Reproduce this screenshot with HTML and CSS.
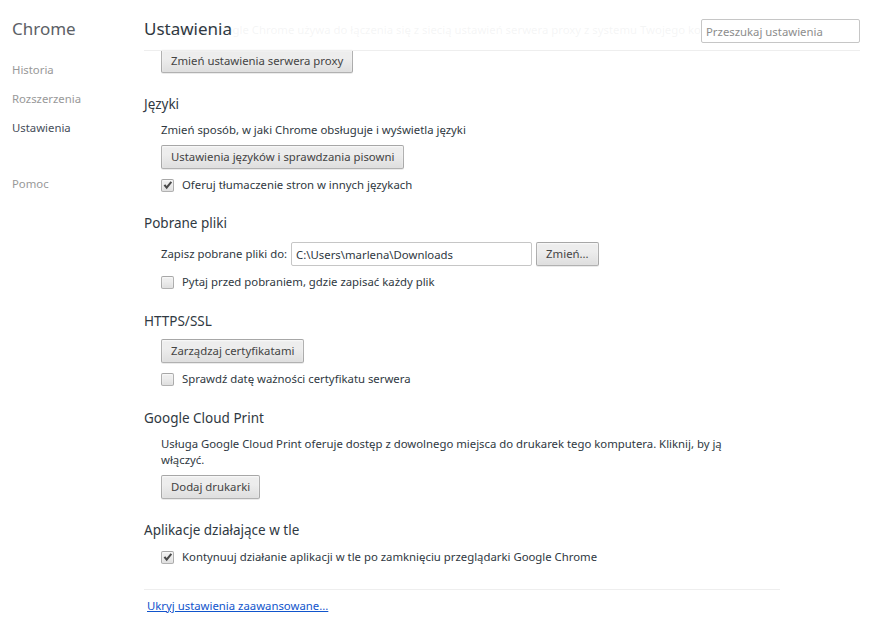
FILE: index.html
```html
<!DOCTYPE html>
<html lang="pl">
<head>
<meta charset="utf-8">
<title>Ustawienia</title>
<link rel="stylesheet" href="styles.css">
</head>
<body>
<div class="app">
  <aside class="sidebar">
    <h1 class="brand">Chrome</h1>
    <ul class="nav">
      <li>Historia</li>
      <li>Rozszerzenia</li>
      <li class="active">Ustawienia</li>
      <li class="nav-sep">Pomoc</li>
    </ul>
  </aside>
  <main class="main">
    <header class="page-header">
      <h2 class="page-title">Ustawienia</h2>
      <input class="search" type="text" placeholder="Przeszukaj ustawienia">
    </header>
    <div class="content">
      <div class="proxy">
        <p class="text scrolled">Program Google Chrome używa do łączenia się z siecią ustawień serwera proxy z systemu Twojego komputera.</p>
        <button class="btn">Zmień ustawienia serwera proxy</button>
      </div>

      <section class="section">
        <h3 class="section-title">Języki</h3>
        <div class="section-body">
          <p class="text">Zmień sposób, w jaki Chrome obsługuje i wyświetla języki</p>
          <button class="btn">Ustawienia języków i sprawdzania pisowni</button>
          <label class="check"><span class="box checked"><svg viewBox="0 0 13 13" width="13" height="13"><path d="M2.6 6.6 L4.3 5.2 L5.6 7.1 L9.6 2.2 L11.1 3.4 L5.7 10.2 Z" fill="#4a4a4a"/></svg></span>Oferuj tłumaczenie stron w innych językach</label>
        </div>
      </section>

      <section class="section section-tight">
        <h3 class="section-title">Pobrane pliki</h3>
        <div class="section-body">
          <div class="path-row">
            <span class="text">Zapisz pobrane pliki do:</span>
            <input class="path" type="text" value="C:\Users\marlena\Downloads">
            <button class="btn btn-small">Zmień...</button>
          </div>
          <label class="check"><span class="box"></span>Pytaj przed pobraniem, gdzie zapisać każdy plik</label>
        </div>
      </section>

      <section class="section">
        <h3 class="section-title">HTTPS/SSL</h3>
        <div class="section-body">
          <button class="btn">Zarządzaj certyfikatami</button>
          <label class="check"><span class="box"></span>Sprawdź datę ważności certyfikatu serwera</label>
        </div>
      </section>

      <section class="section">
        <h3 class="section-title">Google Cloud Print</h3>
        <div class="section-body">
          <p class="text para">Usługa Google Cloud Print oferuje dostęp z dowolnego miejsca do drukarek tego komputera. Kliknij, by ją włączyć.</p>
          <button class="btn">Dodaj drukarki</button>
        </div>
      </section>

      <section class="section">
        <h3 class="section-title">Aplikacje działające w tle</h3>
        <div class="section-body">
          <label class="check"><span class="box checked"><svg viewBox="0 0 13 13" width="13" height="13"><path d="M2.6 6.6 L4.3 5.2 L5.6 7.1 L9.6 2.2 L11.1 3.4 L5.7 10.2 Z" fill="#4a4a4a"/></svg></span>Kontynuuj działanie aplikacji w tle po zamknięciu przeglądarki Google Chrome</label>
        </div>
      </section>

      <div class="footer">
        <a class="link" href="#">Ukryj ustawienia zaawansowane...</a>
      </div>
    </div>
  </main>
</div>
</body>
</html>
```

FILE: styles.css
```css
* { box-sizing: border-box; }

html, body {
  margin: 0;
  padding: 0;
  background: #fff;
}

body {
  font-family: "Noto Sans", "Open Sans", sans-serif;
  font-size: 11.35px;
  color: #303942;
  overflow: hidden;
}

.app {
  display: flex;
  align-items: flex-start;
  min-height: 624px;
}

/* Sidebar */
.sidebar {
  width: 144px;
  flex: none;
  padding-left: 12px;
}

.brand {
  margin: 17px 0 0;
  font-size: 17px;
  font-weight: normal;
  line-height: 24px;
  color: #5c6166;
}

.nav {
  list-style: none;
  margin: 21px 0 0;
  padding: 0;
}

.nav li {
  line-height: 16px;
  margin-bottom: 13px;
  color: #999;
}

.nav li.active {
  color: #464e5a;
}

.nav li.nav-sep {
  margin-top: 40px;
}

/* Main */
.main {
  flex: 1;
  position: relative;
  padding-right: 9px;
}

.page-header {
  position: absolute;
  top: 0;
  left: 0;
  right: 9px;
  height: 51px;
  background: rgba(255, 255, 255, 0.95);
  border-bottom: 1px solid #eeeeee;
  display: flex;
  justify-content: space-between;
  align-items: flex-start;
  z-index: 2;
}

.page-title {
  margin: 17px 0 0;
  font-size: 17px;
  font-weight: normal;
  line-height: 24px;
  color: #303942;
}

.search {
  margin-top: 19px;
  width: 159px;
  height: 24px;
  border: 1px solid #c6c6c6;
  border-radius: 2px;
  padding: 0 4px;
  font-family: inherit;
  font-size: 11.35px;
  color: #303942;
  outline: none;
}

.search::placeholder {
  color: #8d8d8d;
}

.content {
  width: 636px;
}

.text {
  margin: 0;
  line-height: 16px;
}

.proxy {
  padding: 22px 0 0 17px;
  display: flex;
  flex-direction: column;
  align-items: flex-start;
  gap: 11px;
}

.scrolled {
  white-space: nowrap;
}

/* Buttons */
.btn {
  height: 24px;
  padding: 0 9px;
  border: 1px solid rgba(0, 0, 0, 0.25);
  border-radius: 2px;
  background: linear-gradient(#ededed, #ededed 38%, #dedede);
  box-shadow: 0 1px 0 rgba(0, 0, 0, 0.08), inset 0 1px 2px rgba(255, 255, 255, 0.75);
  font-family: inherit;
  font-size: 11.35px;
  color: #444;
  line-height: 22px;
  cursor: pointer;
}

.btn-small {
  padding: 0 9px;
}

/* Sections */
.section {
  margin-top: 22px;
}

.section-tight {
  margin-top: 21px;
}

.section-title {
  margin: 0 0 9px;
  font-size: 13.5px;
  font-weight: normal;
  line-height: 18px;
  color: #303942;
}

.section-body {
  padding-left: 17px;
  display: flex;
  flex-direction: column;
  align-items: flex-start;
  gap: 7px;
}

.para {
  max-width: 590px;
}

.path-row {
  margin-top: 1px;
  display: flex;
  align-items: center;
  gap: 4px;
}

.path {
  width: 241px;
  height: 24px;
  border: 1px solid #c6c6c6;
  border-radius: 2px;
  padding: 0 4px;
  font-family: inherit;
  font-size: 11.35px;
  color: #303942;
  outline: none;
}

/* Checkboxes */
.check {
  display: flex;
  align-items: center;
  gap: 8px;
  line-height: 16px;
  margin-top: 1px;
}

.box {
  width: 13px;
  height: 13px;
  flex: none;
  border: 1px solid rgba(0, 0, 0, 0.25);
  border-radius: 2px;
  background: linear-gradient(#ededed, #ededed 38%, #dedede);
  box-shadow: inset 0 1px 2px rgba(255, 255, 255, 0.75);
  position: relative;
}

.box svg {
  position: absolute;
  top: -1px;
  left: -1px;
}

/* Footer */
.footer {
  margin-top: 24px;
  border-top: 1px solid #eeeeee;
  padding: 8px 0 0 3px;
  line-height: 16px;
}

.link {
  color: #1155cc;
  text-decoration: underline;
}
```
